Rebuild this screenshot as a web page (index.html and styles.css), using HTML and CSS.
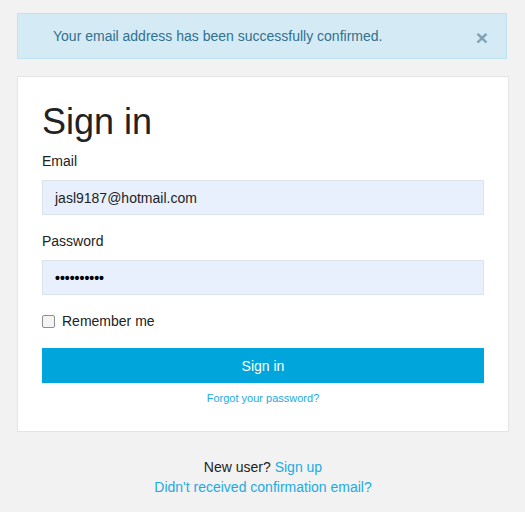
FILE: index.html
```html
<!DOCTYPE html>
<html>
<head>
<meta charset="utf-8">
<link rel="stylesheet" href="styles.css">
</head>
<body>
<div class="page">
  <div class="alert">
    <span class="alert-text">Your email address has been successfully confirmed.</span>
    <span class="close">&times;</span>
  </div>
  <div class="card">
    <h1 class="title">Sign in</h1>
    <div class="group">
      <label class="label">Email</label>
      <div class="input">jasl9187@hotmail.com</div>
    </div>
    <div class="group">
      <label class="label">Password</label>
      <div class="input dots">••••••••••</div>
    </div>
    <div class="check">
      <span class="box"></span>
      <span class="check-label">Remember me</span>
    </div>
    <div class="btn">Sign in</div>
    <div class="forgot"><a class="link">Forgot your password?</a></div>
  </div>
  <div class="footer">
    <div>New user? <a class="link">Sign up</a></div>
    <div><a class="link">Didn't received confirmation email?</a></div>
  </div>
</div>
</body>
</html>
```

FILE: styles.css
```css
html, body {
  margin: 0;
  padding: 0;
  background: #f2f2f2;
}
body {
  font-family: "Liberation Sans", Arial, sans-serif;
  font-size: 14px;
  line-height: 20px;
  color: #222;
}
.page {
  padding: 13px 16px 0 17px;
}
.alert {
  box-sizing: border-box;
  width: 490px;
  height: 46px;
  background: #d4ebf6;
  border: 1px solid #bde3f1;
  color: #31708f;
  display: flex;
  align-items: center;
  justify-content: space-between;
  padding: 0 18px 0 35px;
  margin-bottom: 17px;
}
.alert-text {
  position: relative;
  top: 0;
}
.close {
  font-size: 21px;
  font-weight: bold;
  color: #7da2b6;
  line-height: 1;
  position: relative;
  top: 1px;
}
.card {
  background: #fff;
  border: 1px solid #e4e4e4;
  padding: 25px 24px 26px 24px;
}
.title {
  font-size: 36px;
  font-weight: normal;
  line-height: 40px;
  margin: 0 0 9px 0;
  color: #222;
}
.group {
  margin-bottom: 16px;
}
.label {
  display: block;
  margin-bottom: 9px;
}
.input {
  box-sizing: border-box;
  height: 35px;
  background: #e8f0fe;
  border: 1px solid #dde3ea;
  padding: 0 12px;
  display: flex;
  align-items: center;
  color: #222;
}
.dots {
  font-size: 14px;
  font-weight: bold;
  color: #000;
}
.check {
  display: flex;
  align-items: center;
  gap: 7px;
  margin-top: 16px;
  margin-bottom: 17px;
}
.box {
  box-sizing: border-box;
  width: 13px;
  height: 13px;
  border: 1px solid #8f8f8f;
  border-radius: 2px;
  background: #f4f4f4;
}
.btn {
  height: 35px;
  background: #00a6db;
  color: #fff;
  display: flex;
  align-items: center;
  justify-content: center;
}
.forgot {
  text-align: center;
  font-size: 11px;
  line-height: 14px;
  margin-top: 8px;
}
.link {
  color: #1eaae2;
  text-decoration: none;
}
.footer {
  text-align: center;
  margin-top: 25px;
}
```
